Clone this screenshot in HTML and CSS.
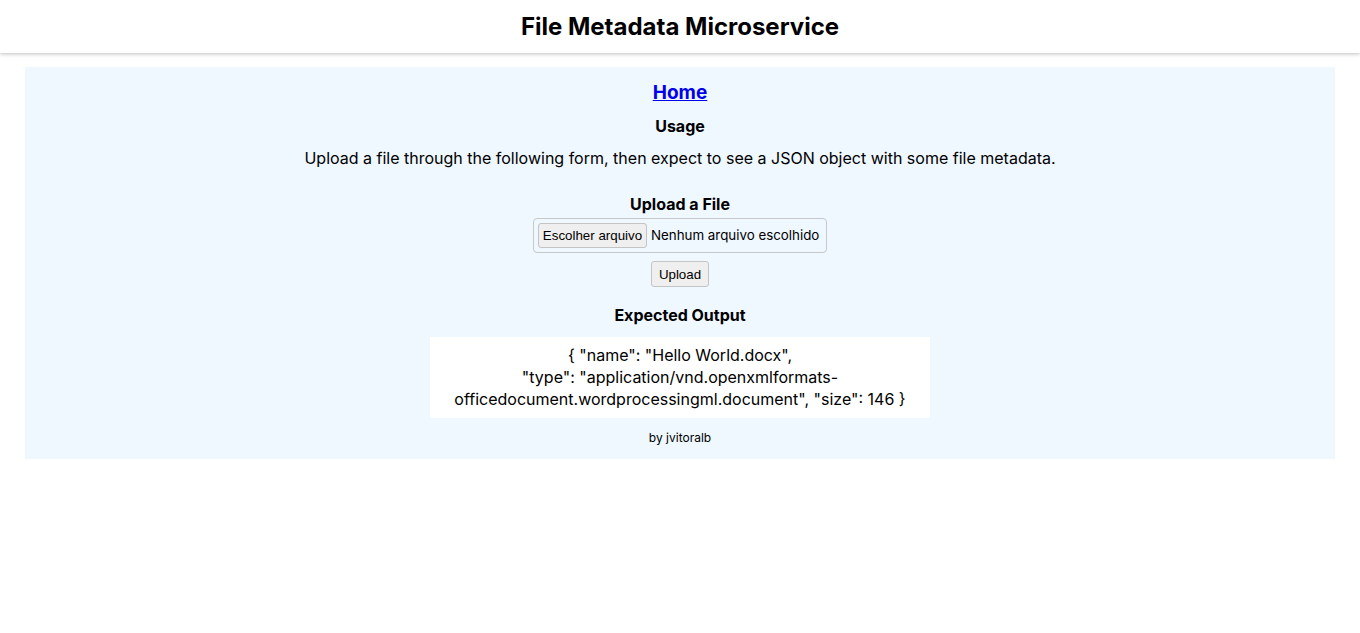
FILE: index.html
```html
<!DOCTYPE html>
<html lang="pt-BR">
<head>
<meta charset="utf-8">
<title>File Metadata Microservice</title>
<link rel="stylesheet" href="styles.css">
</head>
<body>
<header class="top">
  <h1 class="title">File Metadata Microservice</h1>
</header>
<main class="panel">
  <a class="home" href="#">Home</a>
  <h3 class="usage">Usage</h3>
  <p class="desc">Upload a file through the following form, then expect to see a JSON object with some file metadata.</p>
  <h3 class="sub">Upload a File</h3>
  <form class="form">
    <div class="filebox">
      <span class="filebtn">Escolher arquivo</span>
      <span class="filename">Nenhum arquivo escolhido</span>
    </div>
    <button type="button" class="upload">Upload</button>
  </form>
  <h3 class="sub2">Expected Output</h3>
  <div class="code">{ "name": "Hello World.docx",<br>"type": "application/vnd.openxmlformats-officedocument.wordprocessingml.document", "size": 146 }</div>
  <p class="by">by jvitoralb</p>
</main>
</body>
</html>
```
FILE: styles.css
```css
html, body {
  margin: 0;
  padding: 0;
  background: #fff;
  font-family: Inter, "Noto Sans", sans-serif;
  color: #000;
}
.top {
  height: 53px;
  display: flex;
  align-items: center;
  justify-content: center;
  background: #fff;
  box-shadow: 0 1px 4px rgba(0,0,0,0.25);
}
.title {
  margin: 0;
  font-size: 24px;
  font-weight: 700;
  line-height: 30px;
  padding-top: 1px;
}
.panel {
  margin: 14px 25px 0;
  background: #eff7ff;
  padding: 13px 0 13px;
  display: flex;
  flex-direction: column;
  align-items: center;
  text-align: center;
}
.home {
  margin-top: 1px;
  font-size: 19px;
  font-weight: 700;
  line-height: 24px;
  color: #0000ee;
  text-decoration: underline;
}
.usage {
  margin: 11px 0 0;
  font-size: 16px;
  font-weight: 700;
  line-height: 20px;
}
.desc {
  margin: 12px 0 0;
  font-size: 16px;
  line-height: 20px;
}
.sub {
  margin: 26px 0 0;
  font-size: 16px;
  font-weight: 700;
  line-height: 20px;
}
.form {
  display: flex;
  flex-direction: column;
  align-items: center;
  margin: 4px 0 0;
}
.filebox {
  display: flex;
  align-items: center;
  gap: 4px;
  box-sizing: border-box;
  width: 294px;
  height: 35px;
  padding: 0 4px;
  border: 1px solid #c8c8c8;
  border-radius: 4px;
  font-size: 13px;
}
.filebtn {
  box-sizing: border-box;
  width: 109px;
  height: 25px;
  line-height: 23px;
  padding: 0;
  text-align: center;
  white-space: nowrap;
  font-family: "Liberation Sans", Arial, sans-serif;
  font-size: 13.33px;
  background: #efefef;
  border: 1px solid #c4c4c4;
  border-radius: 3px;
  color: #000;
}
.filename {
  line-height: 23px;
  white-space: nowrap;
  font-size: 13.33px;
}
.upload {
  margin-top: 8px;
  box-sizing: border-box;
  width: 58px;
  height: 26px;
  padding: 0;
  font-family: "Liberation Sans", Arial, sans-serif;
  font-size: 13.33px;
  background: #efefef;
  border: 1px solid #c4c4c4;
  border-radius: 3px;
  color: #000;
}
.sub2 {
  margin: 18px 0 0;
  font-size: 16px;
  font-weight: 700;
  line-height: 20px;
}
.code {
  margin-top: 12px;
  box-sizing: border-box;
  width: 500px;
  background: #fff;
  padding: 7px 10px 8px;
  font-size: 16px;
  line-height: 22px;
}
.by {
  margin: 12px 0 0;
  font-size: 12px;
  line-height: 16px;
}
```
